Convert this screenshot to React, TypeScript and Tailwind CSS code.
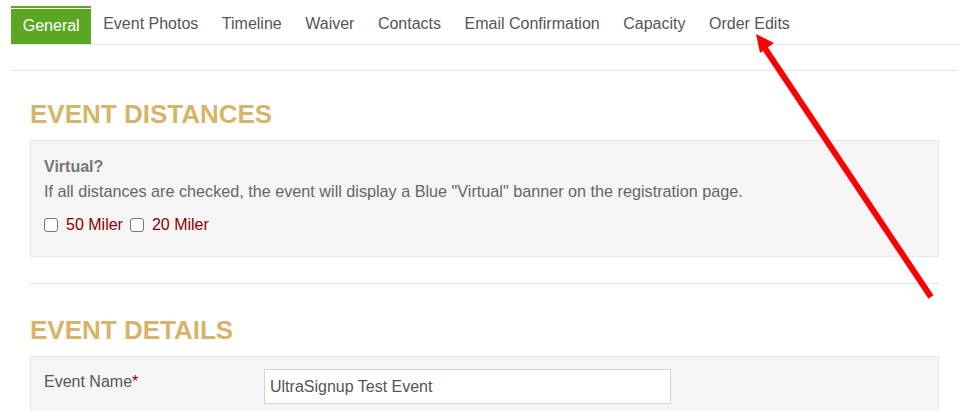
import { ReactNode } from 'react';

const tabs = ['General', 'Event Photos', 'Timeline', 'Waiver', 'Contacts', 'Email Confirmation', 'Capacity', 'Order Edits'];

function Heading({ children }: { children: ReactNode }) {
  return (
    <h2 className="text-[26px] font-bold leading-[29px] text-[#d8b46b]">{children}</h2>
  );
}

function Box({ children, className }: { children: ReactNode; className?: string }) {
  return (
    <div className={`border border-[#e8e8e8] bg-[#f5f5f5] px-[13px] ${className ?? ''}`}>{children}</div>
  );
}

function Distance({ label }: { label: string }) {
  return (
    <label className="flex items-center gap-[8px]">
      <span className="inline-block h-[14px] w-[14px] rounded-[3px] border border-[#767676] bg-white" />
      <span className="text-[#8b0000]">{label}</span>
    </label>
  );
}

export default function App() {
  return (
    <div className="relative h-[411px] w-[977px] overflow-hidden bg-white font-['Liberation_Sans',Arial,sans-serif] text-[16px] text-[#666]">
      {/* tabs */}
      <div className="ml-[11px] mr-[19px]">
        <ul className="flex items-end border-b border-[#e6e6e6] pt-[6px] text-[16px] leading-[18px] text-[#555]">
          {tabs.map((t, i) =>
            i === 0 ? (
              <li key={t} className="border-t-2 border-[#5ba723] pt-px">
                <div className="bg-[#5ba723] px-[11.75px] py-[8px] pb-[9px] text-white">{t}</div>
              </li>
            ) : (
              <li key={t} className="px-[11.75px] pt-[9px] pb-[11px]">
                {t}
              </li>
            )
          )}
        </ul>
        <div className="mt-[25px] border-t border-[#e2e2e2]" />
      </div>

      {/* content */}
      <div className="ml-[30px] w-[909px]">
        <div className="mt-[29px]">
          <Heading>EVENT DISTANCES</Heading>
        </div>
        <Box className="mt-[11px] h-[117px] pt-[17px]">
          <div className="font-bold leading-[18px] text-[#777]">Virtual?</div>
          <p className="mt-[6px] text-[16.2px] leading-[18px]">
            If all distances are checked, the event will display a Blue "Virtual" banner on the registration page.
          </p>
          <div className="mt-[16px] flex items-center gap-[7px] leading-[18px]">
            <Distance label="50 Miler" />
            <Distance label="20 Miler" />
          </div>
        </Box>

        <div className="mt-[26px] border-t border-[#e2e2e2]" />

        <div className="mt-[32px]">
          <Heading>EVENT DETAILS</Heading>
        </div>
        <Box className="mt-[11px] h-[60px]">
          <div className="flex pt-[12px]">
            <div className="w-[220px] pt-[4px] leading-[18px] text-[#555]">
              Event Name<span className="text-[#8b0000]">*</span>
            </div>
            <div className="flex h-[35px] w-[407px] items-center border border-[#d4d4d4] bg-white px-[5px] text-[#555]">
              UltraSignup Test Event
            </div>
          </div>
        </Box>
      </div>

      {/* red annotation arrow */}
      <svg className="pointer-events-none absolute left-0 top-0" width="977" height="411" viewBox="0 0 977 411">
        <line x1="931" y1="297" x2="764" y2="47" stroke="#ff0000" strokeWidth="6" />
        <polygon points="756,34 760,53 774,43" fill="#ff0000" />
      </svg>
    </div>
  );
}
